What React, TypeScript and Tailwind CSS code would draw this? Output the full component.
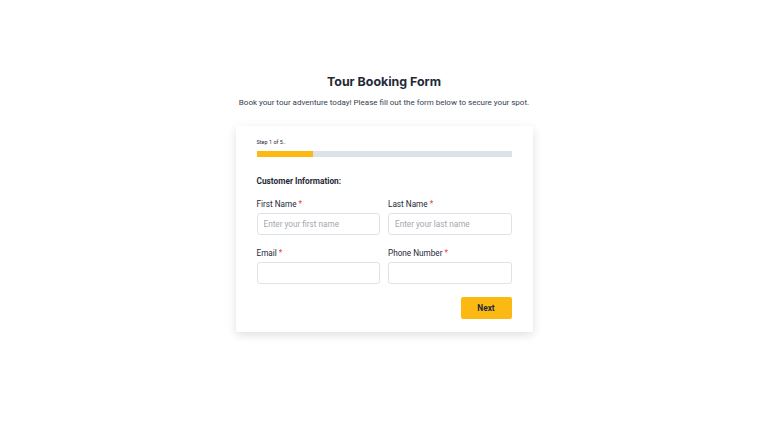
import React from "react";

const Field = ({ label, placeholder }: { label: string; placeholder?: string }) => (
  <div className="flex flex-col">
    <label className="text-[8.2px] leading-[12px] text-[#1f2937] mb-[3px]">
      {label} <span className="text-[#ef4444]">*</span>
    </label>
    <input
      className="h-[22px] w-full rounded-[3px] border border-[#dfe3e8] bg-white px-[6px] text-[8.2px] text-[#374151] placeholder:text-[#a3a8b0] outline-none"
      placeholder={placeholder}
    />
  </div>
);

export default function App() {
  return (
    <div
      className="min-h-[432px] w-full bg-white flex flex-col items-center pt-[73px]"
      style={{ fontFamily: "Roboto, 'Liberation Sans', sans-serif" }}
    >
      <h1
        className="text-[12.4px] leading-[18px] font-bold text-[#1f2937]"
        style={{ fontFamily: "Inter, 'Liberation Sans', sans-serif" }}
      >
        Tour Booking Form
      </h1>
      <p className="mt-[6px] text-[8px] leading-[12px] text-[#374151]">
        Book your tour adventure today! Please fill out the form below to secure your spot.
      </p>

      <div className="mt-[17px] w-[297px] bg-white rounded-[2px] shadow-[0_3px_10px_rgba(0,0,0,0.13)] px-[21px] pt-[12px] pb-[13px]">
        <div className="text-[5.5px] leading-[8px] text-[#1f2937]">Step 1 of 5..</div>
        <div className="mt-[5px] h-[6px] w-full bg-[#dce3e8]">
          <div className="h-full w-[22%] bg-[#fdb913]" />
        </div>

        <h2 className="mt-[18px] text-[8.3px] leading-[12px] font-bold text-[#1f2937]">
          Customer Information:
        </h2>

        <div className="mt-[11px] grid grid-cols-2 gap-x-[8px] gap-y-[12px]">
          <Field label="First Name" placeholder="Enter your first name" />
          <Field label="Last Name" placeholder="Enter your last name" />
          <Field label="Email" />
          <Field label="Phone Number" />
        </div>

        <div className="mt-[13px] flex justify-end">
          <button className="h-[22px] w-[51px] rounded-[2px] bg-[#fdb913] text-[8.3px] font-bold text-[#1f2937]">
            Next
          </button>
        </div>
      </div>
    </div>
  );
}
